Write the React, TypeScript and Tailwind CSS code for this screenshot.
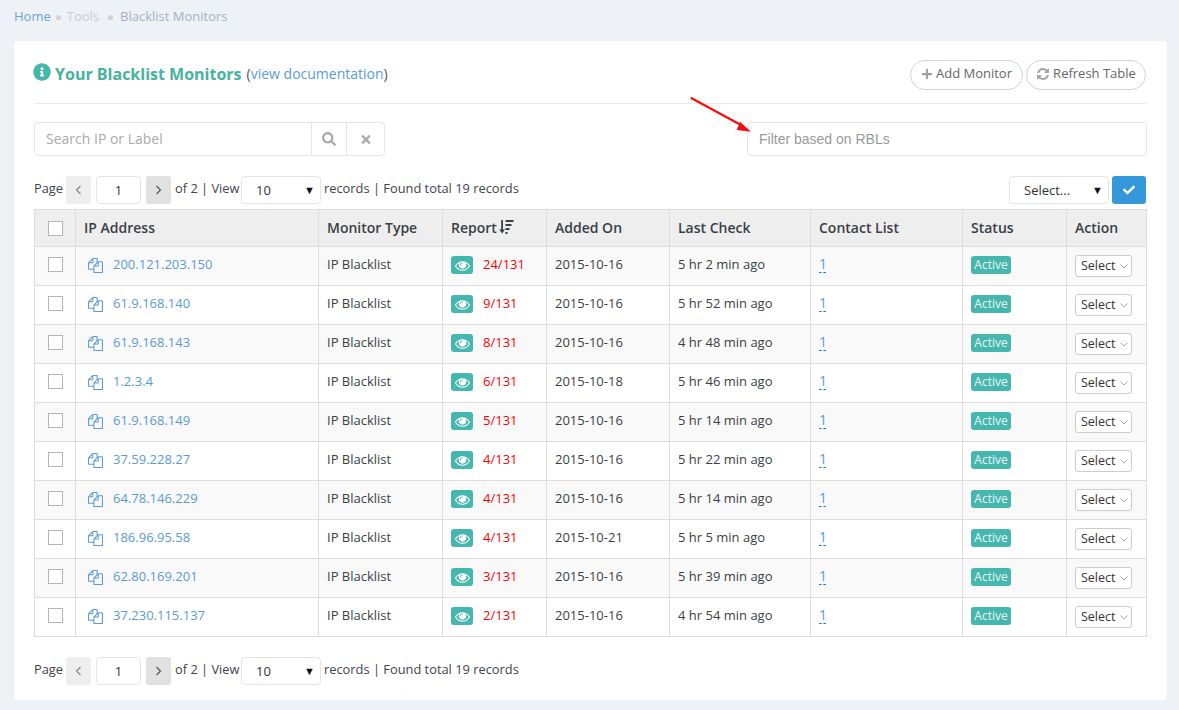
import React from "react";
import { FaInfoCircle, FaPlus, FaSearch, FaTimes, FaCheck } from "react-icons/fa";

const rows = [
  ["200.121.203.150", "24/131", "2015-10-16", "5 hr 2 min ago"],
  ["61.9.168.140", "9/131", "2015-10-16", "5 hr 52 min ago"],
  ["61.9.168.143", "8/131", "2015-10-16", "4 hr 48 min ago"],
  ["1.2.3.4", "6/131", "2015-10-18", "5 hr 46 min ago"],
  ["61.9.168.149", "5/131", "2015-10-16", "5 hr 14 min ago"],
  ["37.59.228.27", "4/131", "2015-10-16", "5 hr 22 min ago"],
  ["64.78.146.229", "4/131", "2015-10-16", "5 hr 14 min ago"],
  ["186.96.95.58", "4/131", "2015-10-21", "5 hr 5 min ago"],
  ["62.80.169.201", "3/131", "2015-10-16", "5 hr 39 min ago"],
  ["37.230.115.137", "2/131", "2015-10-16", "4 hr 54 min ago"],
];

function CopyIcon() {
  return (
    <svg width="15" height="15" viewBox="0 0 1792 1792" fill="#5b9bd5" className="shrink-0">
      <path d="M1696 384q40 0 68 28t28 68v1216q0 40-28 68t-68 28h-960q-40 0-68-28t-28-68v-288h-544q-40 0-68-28t-28-68v-672q0-40 20-88t48-76l408-408q28-28 76-48t88-20h416q40 0 68 28t28 68v328q68-40 128-40h416zm-544 213l-299 299h299v-299zm-640-384l-299 299h299v-299zm196 647l316-316v-416h-384v416q0 40-28 68t-68 28h-416v640h512v-256q0-40 20-88t48-76zm956 804v-1152h-384v416q0 40-28 68t-68 28h-416v640h896z" />
    </svg>
  );
}

function EyeIcon() {
  return (
    <svg width="15" height="15" viewBox="0 0 1792 1792" fill="#ffffff">
      <path d="M1664 960q-152-236-381-353 61 104 61 225 0 185-131.500 316.500t-316.500 131.500-316.500-131.500-131.500-316.500q0-121 61-225-229 117-381 353 133 205 333.500 326.500t434.500 121.500 434.500-121.500 333.500-326.500zm-720-384q0-20-14-34t-34-14q-125 0-214.500 89.500t-89.500 214.500q0 20 14 34t34 14 34-14 14-34q0-86 61-147t147-61q20 0 34-14t14-34zm848 384q0 34-20 69-140 230-376.500 368.500t-499.500 138.500-499.500-139-376.500-368q-20-35-20-69t20-69q140-229 376.500-368t499.500-139 499.500 139 376.500 368q20 35 20 69z" />
    </svg>
  );
}

function RefreshIcon() {
  return (
    <svg width="14" height="14" viewBox="0 0 1792 1792" fill="#a3a3a3">
      <path d="M1639 1056q0 5-1 7-64 268-268 434.500t-478 166.500q-146 0-282.500-55t-243.500-157l-129 129q-19 19-45 19t-45-19-19-45v-448q0-26 19-45t45-19h448q26 0 45 19t19 45-19 45l-137 137q71 66 161 102t187 36q134 0 250-65t186-179q11-17 53-117 8-23 30-23h192q13 0 22.500 9.500t9.500 22.500zm25-800v448q0 26-19 45t-45 19h-448q-26 0-45-19t-19-45 19-45l138-138q-148-137-349-137-134 0-250 65t-186 179q-11 17-53 117-8 23-30 23h-199q-13 0-22.500-9.500t-9.500-22.500v-7q65-268 270-434.500t480-166.500q146 0 284 55.500t245 156.500l130-129q19-19 45-19t45 19 19 45z" />
    </svg>
  );
}

function SortIcon() {
  return (
    <svg width="15" height="14" viewBox="0 0 15 14" fill="#3a3f46" className="ml-[2px] shrink-0">
      <path d="M2.200 0h1.800v9.500h2L3.100 13.500 .2 9.500h2z" />
      <rect x="6.500" y="0" width="8" height="2" />
      <rect x="6.500" y="4" width="6" height="2" />
      <rect x="6.500" y="8" width="4" height="2" />
      <rect x="6.500" y="12" width="2" height="2" />
    </svg>
  );
}

function Angle({ d, color }: { d: string; color: string }) {
  return (
    <svg width="7" height="10" viewBox="0 0 7 10" fill="none" stroke={color} strokeWidth="1.200">
      <path d={d} />
    </svg>
  );
}

function Pager() {
  return (
    <div className="flex items-center text-[12.85px] text-[#3f444b] h-[28px]">
      <span className="w-[29px] -mt-[2px] whitespace-nowrap">Page</span>
      <button className="ml-[3px] w-[25px] h-[28px] rounded-[3px] bg-[#eeeeee] flex items-center justify-center"><Angle d="M5.500 1 L1.500 5 L5.500 9" color="#888888" /></button>
      <div className="ml-[5px] w-[45px] h-[28px] rounded-[4px] border border-[#e3e5e8] bg-white flex items-center justify-center text-[13px] text-[#333] pt-[2px]">1</div>
      <button className="ml-[5px] w-[25px] h-[28px] rounded-[3px] bg-[#e1e1e1] flex items-center justify-center"><Angle d="M1.500 1 L5.500 5 L1.500 9" color="#555555" /></button>
      <span className="ml-[4px] w-[62px] -mt-[2px] whitespace-nowrap">of 2 | View</span>
      <div className="ml-[4px] w-[80px] h-[28px] rounded-[4px] border border-[#e3e5e8] bg-white flex items-center justify-between pl-[14px] pr-[5px] text-[13px] text-[#333]">
        <span className="pt-[2px]">10</span>
        <span className="text-[11px] text-[#111]">▼</span>
      </div>
      <span className="ml-[3px] -mt-[2px] whitespace-nowrap">records | Found total 19 records</span>
    </div>
  );
}

const cols = [41, 243, 124, 104, 123, 141, 152, 104, 80];

export default function App() {
  return (
    <div className="w-[1179px] h-[710px] overflow-hidden bg-[#eef1f6] font-['Open_Sans',sans-serif] text-[13px] flex flex-col pt-[8px]">
      <div className="h-[33px] pl-[14px] pb-[15px] flex items-center text-[13px] text-[#a7b1bd]">
        <span className="text-[#6ba3d8]">Home</span>
        <span className="ml-[5px] mr-[6px] w-[5px] h-[5px] rounded-full bg-[#cdd3da]" />
        <span className="text-[#c8cdd3]">Tools</span>
        <span className="ml-[9px] mr-[7px] w-[5px] h-[5px] rounded-full bg-[#cdd3da]" />
        <span>Blacklist Monitors</span>
      </div>
      <div className="relative mx-[14px] w-[1153px] h-[659px] bg-white rounded-[4px] px-[20px] flex flex-col">
        <div className="h-[63px] flex items-center justify-between border-b border-[#e9ebee] pt-[3px]">
          <div className="flex items-center">
            <FaInfoCircle className="w-[18px] h-[18px] text-[#45b7a9] -ml-[1px] mr-[4px] -mt-[3px]" />
            <span className="text-[16px] font-bold text-[#45b39d] mr-[5px]">Your Blacklist Monitors</span>
            <span className="text-[#555] text-[14px]">(<span className="text-[#5b9bd5]">view documentation</span>)</span>
          </div>
          <div className="flex items-center gap-[3px] mt-[2px] mr-[1px]">
            <button className="h-[30px] w-[113px] pb-[2px] rounded-full border border-[#cfd2d6] text-[#666] flex items-center justify-center gap-[3px]"><FaPlus className="w-[12px] h-[12px] text-[#a3a3a3]" />Add Monitor</button>
            <button className="h-[30px] w-[120px] pb-[2px] rounded-full border border-[#cfd2d6] text-[#666] flex items-center justify-center gap-[3px]"><RefreshIcon />Refresh Table</button>
          </div>
        </div>
        <div className="mt-[18px] flex items-center justify-between">
          <div className="w-[351px] h-[34px] rounded-[4px] border border-[#e3e5e8] flex items-center">
            <div className="flex-1 pl-[11px] pb-[2px] text-[14px] text-[#aaa]">Search IP or Label</div>
            <div className="w-[35px] h-full border-l border-[#e3e5e8] flex items-center justify-center"><FaSearch className="w-[14px] h-[14px] text-[#aaa]" /></div>
            <div className="w-[38px] h-full border-l border-[#e3e5e8] flex items-center justify-center"><FaTimes className="w-[12px] h-[13px] text-[#aaa]" /></div>
          </div>
          <div className="w-[400px] h-[34px] rounded-[4px] border border-[#e3e5e8] flex items-center pl-[11px] font-['Liberation_Sans',sans-serif] text-[14px] text-[#999]">Filter based on RBLs</div>
        </div>
        <svg className="absolute left-[675px] top-[55px]" width="70" height="40" viewBox="0 0 70 40">
          <path d="M1.700 1.700 L 52 29" stroke="#f01010" strokeWidth="2.200" fill="none" />
          <path d="M62 35.700 L 47.700 34 L 51 25.700 Z" fill="#f01010" />
        </svg>
        <div className="mt-[20px] flex items-center justify-between">
          <Pager />
          <div className="flex items-center gap-[3px] mr-[1px]">
            <div className="w-[100px] h-[28px] rounded-[4px] border border-[#e3e5e8] flex items-center justify-between pl-[14px] pr-[5px] text-[#333]"><span className="pt-[2px]">Select...</span><span className="text-[11px] text-[#111]">▼</span></div>
            <button className="w-[34px] h-[28px] rounded-[3px] bg-[#3498db] flex items-center justify-center"><FaCheck className="w-[12px] h-[12px] text-white" /></button>
          </div>
        </div>
        <table className="mt-[5px] w-[1113px] table-fixed border-collapse text-[#3a3f46] text-[13px]">
          <colgroup>{cols.map((c, i) => <col key={i} style={{ width: c }} />)}</colgroup>
          <thead>
            <tr className="h-[37px] bg-[#eeeeee] text-[14px] text-left">
              <th className="border border-[#dddddd] pl-[13px] font-normal"><div className="w-[15px] h-[15px] border border-[#b5b5b5] bg-white" /></th>
              <th className="border border-[#dddddd] pl-[8px] pb-[2px] font-semibold">IP Address</th>
              <th className="border border-[#dddddd] pl-[8px] pb-[2px] font-semibold">Monitor Type</th>
              <th className="border border-[#dddddd] pl-[8px] pb-[2px] font-semibold"><div className="flex items-center">Report<SortIcon /></div></th>
              <th className="border border-[#dddddd] pl-[8px] pb-[2px] font-semibold">Added On</th>
              <th className="border border-[#dddddd] pl-[8px] pb-[2px] font-semibold">Last Check</th>
              <th className="border border-[#dddddd] pl-[8px] pb-[2px] font-semibold">Contact List</th>
              <th className="border border-[#dddddd] pl-[8px] pb-[2px] font-semibold">Status</th>
              <th className="border border-[#dddddd] pl-[8px] pb-[2px] font-semibold">Action</th>
            </tr>
          </thead>
          <tbody>
            {rows.map((r, i) => (
              <tr key={i} className={"h-[39px] " + (i % 2 === 0 ? "bg-[#f9f9f9]" : "bg-white")}>
                <td className="border border-[#dddddd] pl-[13px]"><div className="w-[15px] h-[15px] border border-[#b5b5b5] bg-white -mt-[4px]" /></td>
                <td className="border border-[#dddddd] pl-[12px]"><div className="flex items-center gap-[10px] text-[#5b9bd5] -mt-[2px]"><CopyIcon /><span>{r[0]}</span></div></td>
                <td className="border border-[#dddddd] pl-[8px]"><div className="-mt-[2px]">IP Blacklist</div></td>
                <td className="border border-[#dddddd] pl-[8px]">
                  <div className="flex items-center -mt-[2px]">
                    <span className="w-[22px] h-[18px] rounded-[3px] bg-[#45b7af] flex items-center justify-center"><EyeIcon /></span>
                    <span className="text-[#ff0000] ml-[10px]">{r[1]}</span>
                  </div>
                </td>
                <td className="border border-[#dddddd] pl-[8px]"><div className="-mt-[2px]">{r[2]}</div></td>
                <td className="border border-[#dddddd] pl-[8px]"><div className="-mt-[2px]">{r[3]}</div></td>
                <td className="border border-[#dddddd] pl-[8px]"><div className="-mt-[2px]"><span className="text-[#5b9bd5] text-[14px] border-b border-dashed border-[#0a84d0] inline-block leading-[17px] w-[7px]">1</span></div></td>
                <td className="border border-[#dddddd] pl-[8px]"><div className="w-[40px] h-[18px] rounded-[3px] bg-[#45b7af] text-[#e8f6f4] text-[12px] flex items-center justify-center -mt-[2px]">Active</div></td>
                <td className="border border-[#dddddd] pl-[8px]">
                  <div className="w-[57px] h-[22px] rounded-[3px] border border-[#cccccc] bg-white flex items-center pl-[5px] text-[12.5px] text-[#333] gap-[4px]">Select
                    <svg width="8" height="5" viewBox="0 0 8 5" fill="none" stroke="#aaaaaa" strokeWidth="1"><path d="M.5.5 L4 4 L7.500.5" /></svg>
                  </div>
                </td>
              </tr>
            ))}
          </tbody>
        </table>
        <div className="mt-[20px]"><Pager /></div>
      </div>
    </div>
  );
}
